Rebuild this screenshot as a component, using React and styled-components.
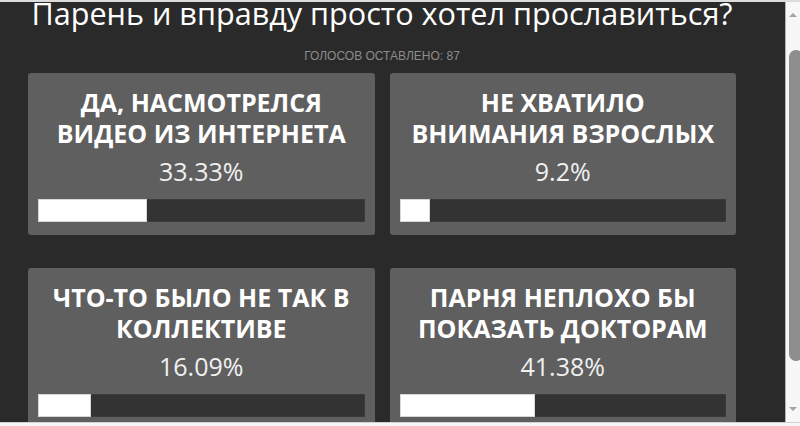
import styled, { createGlobalStyle } from "styled-components";

const GlobalStyle = createGlobalStyle`
  html, body {
    margin: 0;
    padding: 0;
    background: #f7f7f7;
    overflow: hidden;
  }
  body {
    font-family: "Open Sans", "Liberation Sans", sans-serif;
  }
`;

// poll answers with raw vote counts, percentages are derived below
const answers = [
  { id: 1, label: "ДА, НАСМОТРЕЛСЯ\nВИДЕО ИЗ ИНТЕРНЕТА", votes: 29 },
  { id: 2, label: "НЕ ХВАТИЛО\nВНИМАНИЯ ВЗРОСЛЫХ", votes: 8 },
  { id: 3, label: "ЧТО-ТО БЫЛО НЕ ТАК В\nКОЛЛЕКТИВЕ", votes: 14 },
  { id: 4, label: "ПАРНЯ НЕПЛОХО БЫ\nПОКАЗАТЬ ДОКТОРАМ", votes: 36 },
];

function PollAnswer({ label, percent }) {
  return (
    <Card>
      <Label>{label}</Label>
      <Percent>{percent}%</Percent>
      <Bar>
        <Fill style={{ width: `${percent}%` }} />
      </Bar>
    </Card>
  );
}

function App() {
  const total = answers.reduce((sum, a) => sum + a.votes, 0);

  return (
    <>
      <GlobalStyle />
      <Frame>
        <Viewport>
          <Panel>
            <Title>Парень и вправду просто хотел прославиться?</Title>
            <VoteCount>Голосов оставлено: {total}</VoteCount>
            <Grid>
              {answers.map((a) => (
                <PollAnswer
                  key={a.id}
                  label={a.label}
                  percent={Math.round((a.votes / total) * 10000) / 100}
                />
              ))}
            </Grid>
          </Panel>
          <Scrollbar>
            <Arrow $dir="up" />
            <Thumb />
            <Spacer />
            <Arrow $dir="down" />
          </Scrollbar>
        </Viewport>
        <Bottom />
      </Frame>
    </>
  );
}

const Frame = styled.div`
  display: flex;
  flex-direction: column;
  width: 800px;
  height: 426px;
  border-top: 2px solid #dcdcdc;
  box-sizing: border-box;
`;

const Viewport = styled.div`
  display: flex;
  height: 420px;
`;

const Bottom = styled.div`
  flex: 1;
  background: #f7f7f7;
  border-top: 1px solid #d2d2d2;
`;

const Panel = styled.div`
  width: 785px;
  flex-shrink: 0;
  background: #2a2a2a;
  overflow: hidden;
  padding: 0 49px 0 28px;
  box-sizing: border-box;
`;

const Title = styled.h1`
  margin: -7px 0 0;
  font-size: 30.6px;
  line-height: 36px;
  font-weight: 400;
  color: #ffffff;
  text-align: center;
  white-space: nowrap;
`;

const VoteCount = styled.div`
  margin-top: 18px;
  font-family: "Liberation Sans", Arial, sans-serif;
  font-size: 12px;
  line-height: 14px;
  color: #8c8c8c;
  text-transform: uppercase;
  text-align: center;
`;

const Grid = styled.div`
  display: grid;
  grid-template-columns: 1fr 1fr;
  column-gap: 15px;
  row-gap: 33px;
  margin-top: 10px;
`;

const Card = styled.div`
  display: flex;
  flex-direction: column;
  background: #5f5f5f;
  border-radius: 3px;
  padding: 14px 10px 13px;
`;

const Label = styled.div`
  font-size: 25px;
  line-height: 31px;
  font-weight: 700;
  color: #ffffff;
  text-align: center;
  white-space: pre-line;
`;

const Percent = styled.div`
  margin-top: 7px;
  font-size: 25px;
  line-height: 31px;
  color: #f0f0f0;
  text-align: center;
`;

const Bar = styled.div`
  margin-top: 12px;
  height: 23px;
  background: #333333;
  box-shadow: inset 0 0 0 1px #3a3a3a;
`;

const Fill = styled.div`
  height: 100%;
  background: #ffffff;
  box-shadow: inset 0 0 0 1px #d6d6d6;
`;

const Scrollbar = styled.div`
  display: flex;
  flex-direction: column;
  flex: 1;
  overflow: hidden;
  background: #f7f7f7;
  border-left: 1px solid #b4b4b4;
`;

const Arrow = styled.div`
  display: flex;
  align-items: center;
  justify-content: center;
  height: 26px;

  &::after {
    content: "";
    width: 0;
    height: 0;
    border-left: 4px solid transparent;
    border-right: 4px solid transparent;
    ${({ $dir }) =>
      $dir === "up"
        ? "border-bottom: 4px solid #a3a3a3;"
        : "border-top: 4px solid #a3a3a3;"}
  }
`;

const Thumb = styled.div`
  margin: 22px 0 0 3px;
  width: 14px;
  height: 311px;
  flex-shrink: 0;
  border-radius: 7px;
  background: #8e8e8e;
`;

const Spacer = styled.div`
  flex: 1;
`;

export default App;
